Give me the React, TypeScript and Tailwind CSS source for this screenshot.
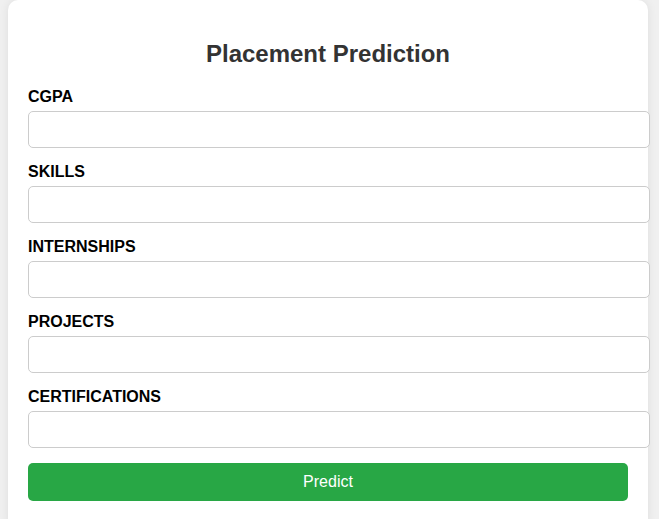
const fields = ["CGPA", "SKILLS", "INTERNSHIPS", "PROJECTS", "CERTIFICATIONS"]

export default function App() {
    return (
        <div className="min-h-screen bg-[#f0f0f0] font-['Liberation_Sans',Arial,sans-serif]">
            <div className="ml-[8px] w-[640px] rounded-[10px] bg-white px-[20px] pt-[40px] pb-[30px] shadow-[0_0_10px_rgba(0,0,0,0.08)]">
                <h2 className="text-center text-[24px] leading-[28px] font-bold text-[#333]">
                    Placement Prediction
                </h2>

                <form className="mt-[20px]" onSubmit={(e) => e.preventDefault()}>
                    {fields.map((name) => (
                        <div key={name}>
                            <label className="block text-[16px] leading-[18px] font-bold text-black mb-[5px]">
                                {name}
                            </label>
                            <input
                                type="text"
                                className="block w-[622px] h-[37px] mb-[15px] px-[10px] rounded-[5px] border border-[#ccc] bg-white outline-none"
                            />
                        </div>
                    ))}
                    <button
                        type="submit"
                        className="block w-[600px] h-[38px] rounded-[5px] bg-[#28a745] text-[16px] text-white"
                    >
                        Predict
                    </button>
                </form>
            </div>
        </div>
    )
}
